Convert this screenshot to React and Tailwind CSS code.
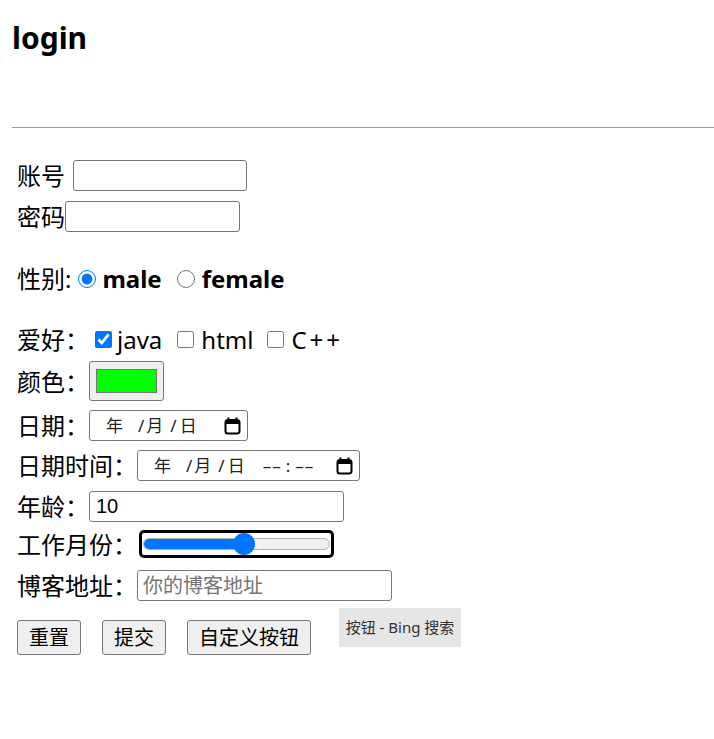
import { useState } from 'react';

function CalendarIcon() {
  return (
    <svg width="17" height="18" viewBox="0 0 17 18" className="shrink-0">
      <path d="M4.5 0.5v3M12.5 0.5v3" stroke="black" strokeWidth="2" />
      <rect x="1.5" y="3" width="14" height="13.5" rx="2.5" fill="none" stroke="black" strokeWidth="2" />
      <rect x="1.5" y="3" width="14" height="4" fill="black" />
    </svg>
  );
}

function DateFields() {
  return (
    <>
      <span>年</span>
      <span className="ml-[15px]">/</span>
      <span className="ml-[2px]">月</span>
      <span className="ml-[7px]">/</span>
      <span className="ml-[3px]">日</span>
    </>
  );
}

export default function App() {
  const [hobbies, setHobbies] = useState({ java: true, html: false, cpp: false });
  const [gender, setGender] = useState('male');
  const [age, setAge] = useState('10');
  const [blog, setBlog] = useState('');

  const font = { fontFamily: '"Noto Sans", "Noto Sans CJK SC", sans-serif' };

  return (
    <div className="min-h-screen w-full bg-white text-black pl-[12px]" style={font}>
      {/* header */}
      <h1 className="pt-[20px] text-[30px] leading-[36px] font-bold">login</h1>
      <div className="mt-[71px] h-px bg-[#9a9a9a]" />

      {/* form */}
      <form className="flex flex-col pl-[5px] text-[24px] leading-[31px]">
        <div className="mt-[32px] flex h-[31px] items-center">
          <span>账号</span>
          <input
            type="text"
            className="ml-[8px] h-[31px] w-[174px] rounded-[3px] border border-[#767676] px-2 text-[20px] outline-none"
          />
        </div>

        <div className="mt-[10px] flex h-[31px] items-center">
          <span>密码</span>
          <input
            type="password"
            className="h-[31px] w-[175px] rounded-[3px] border border-[#767676] px-2 text-[20px] outline-none"
          />
        </div>

        <div className="mt-[31px] flex h-[31px] items-center">
          <span>性别:</span>
          <input
            type="radio"
            name="gender"
            checked={gender === 'male'}
            onChange={() => setGender('male')}
            className="ml-[7px] h-[18px] w-[18px]"
          />
          <span className="ml-[6px] font-bold">male</span>
          <input
            type="radio"
            name="gender"
            checked={gender === 'female'}
            onChange={() => setGender('female')}
            className="ml-[15px] h-[18px] w-[18px]"
          />
          <span className="ml-[7px] font-bold">female</span>
        </div>

        <div className="mt-[30px] flex h-[31px] items-center">
          <span>爱好：</span>
          <input
            type="checkbox"
            checked={hobbies.java}
            onChange={(e) => setHobbies({ ...hobbies, java: e.target.checked })}
            className="ml-[6px] h-[17px] w-[17px]"
          />
          <span className="ml-[5px]">java</span>
          <input
            type="checkbox"
            checked={hobbies.html}
            onChange={(e) => setHobbies({ ...hobbies, html: e.target.checked })}
            className="ml-[15px] h-[17px] w-[17px]"
          />
          <span className="ml-[7px]">html</span>
          <input
            type="checkbox"
            checked={hobbies.cpp}
            onChange={(e) => setHobbies({ ...hobbies, cpp: e.target.checked })}
            className="ml-[14px] h-[17px] w-[17px]"
          />
          <span className="ml-[7px] tracking-[3px]">C++</span>
        </div>

        <div className="mt-[6px] flex h-[40px] items-center">
          <span>颜色：</span>
          <button
            type="button"
            className="flex h-[40px] w-[75px] items-center justify-center rounded-[3px] border border-[#767676] bg-[#efefef]"
          >
            <span className="block h-[24px] w-[61px] border border-[#777] bg-[#00ff00]" />
          </button>
        </div>

        <div className="mt-[9px] flex h-[31px] items-center">
          <span>日期：</span>
          <div className="flex h-[31px] w-[159px] items-center rounded-[3px] border border-[#767676] pl-[16px] pr-[6px] text-[17px] text-[#222]">
            <DateFields />
            <span className="flex-1" />
            <CalendarIcon />
          </div>
        </div>

        <div className="mt-[9px] flex h-[31px] items-center">
          <span>日期时间：</span>
          <div className="flex h-[31px] w-[223px] items-center rounded-[3px] border border-[#767676] pl-[16px] pr-[6px] text-[17px] text-[#222]">
            <DateFields />
            <span className="ml-[18px] tracking-[1px]">––</span>
            <span className="ml-[4px]">:</span>
            <span className="ml-[5px] tracking-[1px]">––</span>
            <span className="flex-1" />
            <CalendarIcon />
          </div>
        </div>

        <div className="mt-[10px] flex h-[31px] items-center">
          <span>年龄：</span>
          <input
            type="text"
            value={age}
            onChange={(e) => setAge(e.target.value)}
            className="h-[31px] w-[255px] rounded-[3px] border border-[#767676] px-[6px] text-[20px] outline-none"
            style={{ fontFamily: '"Liberation Sans", Arial, sans-serif' }}
          />
        </div>

        <div className="mt-[8px] flex h-[28px] items-center">
          <span>工作月份：</span>
          <div className="ml-[2px] flex h-[28px] w-[195px] items-center rounded-[5px] border-[3px] border-black px-[1px]">
            <div className="relative flex h-[12px] w-full rounded-full border border-[#b2b2b2] bg-[#efefef]">
              <div className="h-full w-[100px] rounded-l-full bg-[#0075ff]" />
              <div className="absolute left-[89px] top-[-6px] h-[22px] w-[22px] rounded-full bg-[#0075ff]" />
            </div>
          </div>
        </div>

        <div className="mt-[12px] flex h-[31px] items-center">
          <span>博客地址：</span>
          <input
            type="text"
            value={blog}
            onChange={(e) => setBlog(e.target.value)}
            placeholder="你的博客地址"
            className="h-[31px] w-[255px] rounded-[3px] border border-[#767676] px-[5px] text-[20px] outline-none placeholder:text-[#757575]"
          />
        </div>

        <div className="mt-[7px] flex items-start">
          <button
            type="reset"
            className="mt-[12px] h-[35px] rounded-[3px] border border-[#767676] bg-[#efefef] px-[11px] text-[20px] leading-[33px]"
          >
            重置
          </button>
          <button
            type="submit"
            onClick={(e) => e.preventDefault()}
            className="ml-[21px] mt-[12px] h-[35px] rounded-[3px] border border-[#767676] bg-[#efefef] px-[11px] text-[20px] leading-[33px]"
          >
            提交
          </button>
          <button
            type="button"
            className="ml-[21px] mt-[12px] h-[35px] rounded-[3px] border border-[#767676] bg-[#efefef] px-[11px] text-[20px] leading-[33px]"
          >
            自定义按钮
          </button>
          <span className="ml-[28px] flex h-[39px] w-[122px] items-center justify-center bg-[#e6e6e6] text-[15px] text-[#333]">
            按钮 - Bing 搜索
          </span>
        </div>
      </form>
    </div>
  );
}
